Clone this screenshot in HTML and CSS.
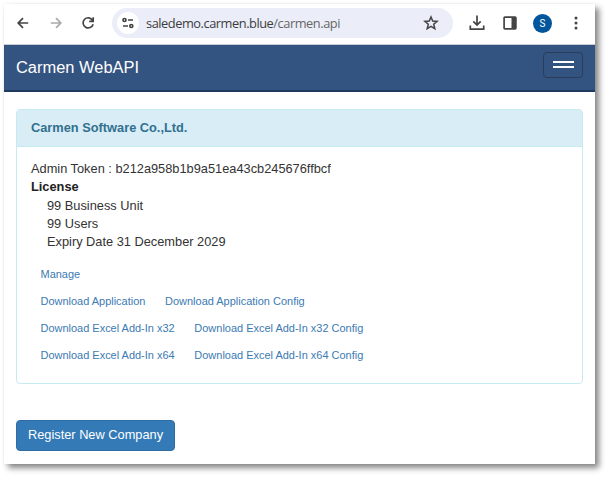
FILE: index.html
```
<!DOCTYPE html>
<html lang="en">
<head>
<meta charset="utf-8">
<title>Carmen WebAPI</title>
<link rel="stylesheet" href="styles.css">
</head>
<body>
<div class="window">
  <div class="toolbar">
    <svg class="icon back" width="12" height="12" viewBox="0 0 12 12"><path d="M11.2 6H1.2M6 1.2L1.2 6L6 10.800"/></svg>
    <svg class="icon forward" width="12" height="12" viewBox="0 0 12 12"><path d="M.8 6h10M6 1.200L10.800 6L6 10.800"/></svg>
    <svg class="icon reload" width="14" height="14" viewBox="0 0 14 14"><path d="M11.600 4.300A5.100 5.100 0 1 0 12.100 8.200M12.200 1.300V5.300H8.200"/></svg>
    <div class="address">
      <span class="site">
        <svg class="icon" width="12" height="12" viewBox="0 0 12 12"><circle cx="2.500" cy="3" r="1.500"/><path d="M6 3h5M1 9h5"/><circle cx="9.300" cy="9" r="1.500"/></svg>
      </span>
      <span class="url">saledemo.carmen.blue<span class="path">/carmen.api</span></span>
      <svg class="icon star" width="16" height="16" viewBox="0 0 16 16"><path d="M8 2l1.700 4.100 4.400.3-3.400 2.900 1.100 4.300L8 11.300l-3.800 2.300 1.100-4.300-3.400-2.900 4.400-.3z"/></svg>
    </div>
    <svg class="icon download" width="16" height="16" viewBox="0 0 16 16"><path d="M8 .5v9.500M4.300 6.300L8 10l3.700-3.700M1.300 10.500v3.700h13.400v-3.700"/></svg>
    <svg class="icon panel" width="14" height="14" viewBox="0 0 14 14"><rect x="1.100" y="1.100" width="11.800" height="11.800" rx=".8"/><path class="solid" d="M8.500 1h4.500v12H8.500z"/></svg>
    <span class="avatar">S</span>
    <svg class="dots" width="4" height="14" viewBox="0 0 4 14"><circle cx="2" cy="2" r="1.500"/><circle cx="2" cy="7" r="1.500"/><circle cx="2" cy="12" r="1.500"/></svg>
  </div>
  <nav class="navbar">
    <span class="brand">Carmen WebAPI</span>
    <button class="toggle" aria-label="Menu"><span></span><span></span></button>
  </nav>
  <main>
    <section class="card">
      <h1>Carmen Software Co.,Ltd.</h1>
      <div class="body">
        <div class="token">Admin Token : b212a958b1b9a51ea43cb245676ffbcf</div>
        <strong>License</strong>
        <div class="terms">
          <div>99 Business Unit</div>
          <div>99 Users</div>
          <div>Expiry Date 31 December 2029</div>
        </div>
        <div class="links">
          <div><a>Manage</a></div>
          <div><a>Download Application</a><a>Download Application Config</a></div>
          <div><a>Download Excel Add-In x32</a><a>Download Excel Add-In x32 Config</a></div>
          <div><a>Download Excel Add-In x64</a><a>Download Excel Add-In x64 Config</a></div>
        </div>
      </div>
    </section>
    <button class="register">Register New Company</button>
  </main>
</div>
</body>
</html>
```
FILE: styles.css
```
* { box-sizing: border-box; }
body {
  margin: 0;
  padding: 4px;
  height: 477px;
  overflow: hidden;
  background: #fff;
  color: #333;
  font: 12.8px/18.3px "Liberation Sans", Arial, sans-serif;
}
.window {
  width: 591px;
  height: 460px;
  background: #fff;
  box-shadow: 4px 4px 6px rgba(0, 0, 0, .48), 0 0 1px rgba(0, 0, 0, .1);
}
.toolbar {
  display: flex;
  align-items: center;
  height: 41px;
  padding: 0 17px 2px 13px;
  border-bottom: 1px solid #c8cbd2;
}
.icon { flex: none; fill: none; stroke: #444; stroke-width: 1.7; }
.forward { margin-left: 21px; stroke: #aaa; }
.reload { margin-left: 19px; }
.address {
  display: flex;
  align-items: center;
  width: 341px;
  height: 30px;
  margin-left: 17px;
  padding: 0 14px 0 5px;
  border-radius: 15px;
  background: #ebeef8;
}
.site {
  display: flex;
  align-items: center;
  justify-content: center;
  width: 22px;
  height: 22px;
  border-radius: 50%;
  background: #fff;
}
.url {
  flex: 1;
  margin-left: 7px;
  color: #3c3c3c;
  font: 12.8px/20px "Open Sans", "Noto Sans", sans-serif;
  letter-spacing: -.45px;
  white-space: nowrap;
}
.path { color: #666; }
.star { stroke-width: 1.5; }
.download { margin-left: 16px; }
.panel { margin-left: 18px; }
.solid { fill: #444; stroke: none; }
.avatar {
  width: 19px;
  height: 19px;
  margin-left: 16px;
  border-radius: 50%;
  background: #02569c;
  color: #fff;
  font: 10px/19px Roboto, sans-serif;
  text-align: center;
}
.dots { margin-left: auto; fill: #444; }
.navbar {
  display: flex;
  align-items: flex-start;
  justify-content: space-between;
  height: 47px;
  padding: 7px 12px 0;
  border-bottom: 2px solid #1f3a5f;
  background: #335481;
}
.brand { color: #fff; font-size: 16.45px; line-height: 31px; }
.toggle {
  display: flex;
  flex-direction: column;
  align-items: center;
  gap: 3px;
  width: 40px;
  height: 26px;
  padding: 8px 0 0;
  border: 1px solid #293d59;
  border-radius: 4px;
  background: none;
}
.toggle span { width: 21px; height: 2px; background: #fff; }
main { padding: 17px 12px 0; }
.card {
  height: 275px;
  border: 1px solid #c5ebf1;
  border-radius: 4px;
}
h1 {
  height: 37px;
  margin: 0;
  padding: 0 14px;
  border-bottom: 1px solid #c5ebf1;
  border-radius: 3px 3px 0 0;
  background: #d9edf6;
  color: #31708f;
  font-size: 12.8px;
  line-height: 36px;
}
.body { padding: 13px 14px 0; }
strong { display: block; color: #222; }
.terms { padding-left: 16px; }
.links { margin-top: 10px; padding-left: 9.5px; }
.links div { display: flex; gap: 19.7px; height: 27px; }
.links a { color: #3c7ab3; font-size: 10.97px; line-height: 27px; }
.register {
  display: block;
  width: 159px;
  height: 31px;
  margin-top: 36px;
  padding: 0 0 2px;
  border: 1px solid #2e6da4;
  border-radius: 4px;
  background: #337ab7;
  color: #fff;
  font: 12.8px/27px "Liberation Sans", Arial, sans-serif;
}
```
